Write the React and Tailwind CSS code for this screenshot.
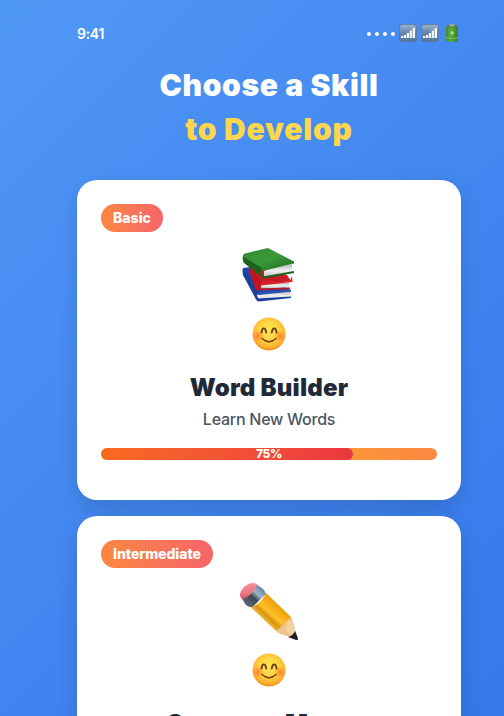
import React from "react";

function SignalIcon() {
  return (
    <svg width="18" height="18" viewBox="0 0 18 18">
      <defs>
        <linearGradient id="sig" x1="0" y1="0" x2="0" y2="1">
          <stop offset="0" stopColor="#9db6d0" />
          <stop offset="0.45" stopColor="#6688ad" />
          <stop offset="1" stopColor="#52779f" />
        </linearGradient>
      </defs>
      <rect x="0.4" y="0.4" width="17.2" height="17.2" rx="2.6" fill="url(#sig)" stroke="#5d7690" strokeWidth="0.8" />
      <path d="M2 12h2.200v2H2zM4.900 11h2.200v3H4.900zM7.800 9H10v5H7.800zM10.700 6.500h2.200V14h-2.200zM13.600 4h2.400v10h-2.400z" fill="#f4f8fb" />
    </svg>
  );
}

function BatteryIcon() {
  return (
    <svg width="14" height="18" viewBox="0 0 14 18">
      <defs>
        <linearGradient id="bat" x1="0" y1="0" x2="1" y2="0">
          <stop offset="0" stopColor="#3d8a2b" />
          <stop offset="0.35" stopColor="#5fae3c" />
          <stop offset="0.7" stopColor="#459a2b" />
          <stop offset="1" stopColor="#3a7f2c" />
        </linearGradient>
      </defs>
      <rect x="4" y="0" width="6" height="3" rx="1.2" fill="#8e9c85" />
      <rect x="1" y="1.3" width="12" height="16.4" rx="1.8" fill="url(#bat)" />
      <ellipse cx="7" cy="2.2" rx="5.6" ry="1.3" fill="#5b7a50" />
      <ellipse cx="7" cy="1.6" rx="2.6" ry="0.9" fill="#a6b59c" />
      <path d="M1 13.2q6 1 12 0v1.2q-6 1-12 0z" fill="#9ab583" opacity="0.6" />
      <path d="M8 6 4.6 9.6h2.2L6.2 12l3.4-3.7H7.4z" fill="#b5dca0" />
    </svg>
  );
}

function Books() {
  return (
    <svg width="54" height="56" viewBox="0 0 54 56">
      <defs>
        <linearGradient id="pages" x1="0" y1="0" x2="0" y2="1">
          <stop offset="0" stopColor="#b5b5b5" />
          <stop offset="0.5" stopColor="#f2f2f2" />
          <stop offset="1" stopColor="#bdbdbd" />
        </linearGradient>
        <linearGradient id="green" x1="0" y1="0" x2="1" y2="1">
          <stop offset="0" stopColor="#2b8a33" />
          <stop offset="0.5" stopColor="#3c9939" />
          <stop offset="1" stopColor="#227321" />
        </linearGradient>
      </defs>
      <path d="M1 21 8 20 48 43 49 45 16 48 1 28z" fill="#2447a6" />
      <path d="M17 47 48 44.500v5L18 53z" fill="url(#pages)" />
      <path d="M1 21 16 45q-2 4 1 6.500L49 49.500V51L17 54.500q-2 0-3-2L1 28q-1-4 0-7z" fill="#1c3f9b" />
      <path d="M16 45.500 49 42.500v2L17 48z" fill="#2a51b8" />
      <path d="M8 19 45 28 49 34 18 38z" fill="#c91c26" />
      <path d="M19 37 47 35.500v5l-28 1z" fill="url(#pages)" />
      <path d="M8 19 20 35q-2 3-.5 6.500L48 40.500V42L17 43.500q-3 0-4-3L8 26q-1-4 0-7z" fill="#c3141f" />
      <path d="M19 35.500 48 34l2-5 .5 6L19 38.500z" fill="#d9232c" />
      <path d="M1 9Q1 7 3 6.500L26 1 52 14.500 20 22z" fill="url(#green)" />
      <path d="M22 23.500 50 17.500V25L22 30z" fill="url(#pages)" />
      <path d="M1 9 20 21q-2.500 4 1 8.500l31-5.500v2L22 31.500q-2 0-3-2L2 16q-2-3-1-7z" fill="#1c641c" />
      <path d="M20 21 52 14v2.500L21 24z" fill="#2c842c" />
    </svg>
  );
}

function Pencil() {
  return (
    <svg width="60" height="60" viewBox="0 0 60 60">
      <defs>
        <linearGradient id="wood" gradientUnits="userSpaceOnUse" x1="38" y1="20" x2="23" y2="37">
          <stop offset="0" stopColor="#dd9510" />
          <stop offset="0.25" stopColor="#f5aa12" />
          <stop offset="0.6" stopColor="#fdc02a" />
          <stop offset="0.78" stopColor="#d99813" />
          <stop offset="1" stopColor="#f0b436" />
        </linearGradient>
        <linearGradient id="metal" gradientUnits="userSpaceOnUse" x1="26" y1="8" x2="11" y2="24">
          <stop offset="0" stopColor="#587997" />
          <stop offset="0.4" stopColor="#9fb7c8" />
          <stop offset="0.65" stopColor="#3b4650" />
          <stop offset="1" stopColor="#59626b" />
        </linearGradient>
        <linearGradient id="eraser" x1="0" y1="0" x2="0" y2="1">
          <stop offset="0" stopColor="#f88d9a" />
          <stop offset="0.55" stopColor="#ee7886" />
          <stop offset="1" stopColor="#b74e5f" />
        </linearGradient>
      </defs>
      <path d="M1 15C0 9 8 2 14 2q4 0 6 4L5 20q-3-2-4-5z" fill="url(#eraser)" />
      <path d="M18 4q7 3 9 9L13 26.500Q5 25 4 18 14 14 18 4z" fill="url(#metal)" />
      <path d="M27 12 52 36 54 41 42 53 37 50 12 26.500Q23 22 27 12z" fill="url(#wood)" />
      <path d="m18 24 22 25" stroke="#cd8d0d" strokeWidth="0.8" />
      <path d="M52 36 54 41 59 59 42 53 38 51q0-3 3-4 1-3 4-3 1-4 7-8z" fill="#ecc48f" />
      <path d="m49 40 4-2 6 21-13-10z" fill="#f7d6a6" opacity="0.7" />
      <path d="m56 50 3 7.500q0 2-2 1.500l-8-3q5-1 7-6z" fill="#1c1d20" />
    </svg>
  );
}

function Smile() {
  return (
    <svg width="34" height="34" viewBox="0 0 34 34">
      <defs>
        <radialGradient id="face" cx="0.5" cy="0.4" r="0.62">
          <stop offset="0" stopColor="#ffe552" />
          <stop offset="0.5" stopColor="#ffd343" />
          <stop offset="0.8" stopColor="#fcb22e" />
          <stop offset="1" stopColor="#e98a22" />
        </radialGradient>
        <radialGradient id="cheek">
          <stop offset="0" stopColor="#ff6a2a" stopOpacity="0.75" />
          <stop offset="1" stopColor="#ff762e" stopOpacity="0" />
        </radialGradient>
      </defs>
      <circle cx="17" cy="17" r="16.5" fill="url(#face)" />
      <circle cx="6" cy="19" r="6" fill="url(#cheek)" />
      <circle cx="28" cy="19" r="6" fill="url(#cheek)" />
      <path d="M9.500 15.500c.7-5.500 3.800-5.500 4.800 0M19.700 15.500c1-5.500 4.100-5.500 4.800 0" fill="none" stroke="#66401c" strokeWidth="1.900" strokeLinecap="round" />
      <path d="M10 21.500Q17 28 24 21.500" fill="none" stroke="#7a3f13" strokeWidth="1.500" strokeLinecap="round" />
    </svg>
  );
}

function SkillCard({ level, badgeClass, icon, title, subtitle, progress }) {
  return (
    <section className="flex h-80 shrink-0 flex-col items-center rounded-[20px] bg-white px-6 pt-6 shadow-[0_8px_20px_rgba(0,0,0,0.14)]">
      <span className={`flex h-7 items-center justify-center self-start rounded-full bg-gradient-to-r from-[#fb873f] to-[#f76469] text-sm font-extrabold text-white ${badgeClass}`}>
        {level}
      </span>
      <div className="mt-3 flex h-[62px] items-center justify-center">{icon}</div>
      <div className="mt-[11px] h-[34px]"><Smile /></div>
      <h2 className="mt-[21px] text-2xl leading-8 font-black tracking-[0.22px] whitespace-nowrap text-[#1f2937]">{title}</h2>
      <p className="mt-[3px] text-base leading-6 font-medium tracking-[-0.25px] text-[#4b5563]">{subtitle}</p>
      <div className="relative mt-[17px] h-3 w-full rounded-full bg-gradient-to-r from-[#fbbf24] to-[#fb873f]">
        <div className="h-full rounded-full bg-gradient-to-r from-[#f96a20] to-[#eb3740]" style={{ width: `${progress}%` }} />
        <span className="absolute inset-0 flex items-center justify-center text-xs leading-3 font-extrabold tracking-[-0.3px] text-white">{progress}%</span>
      </div>
    </section>
  );
}

export default function App() {
  return (
    <div className="h-[716px] overflow-hidden bg-[linear-gradient(135deg,#5098f6_0%,#3677eb_100%)] pl-[77px] font-['Inter','Liberation_Sans',sans-serif]">
      <main className="flex w-96 flex-col">
        <header className="flex h-[66px] items-center justify-between pt-0.5">
          <span className="text-sm font-semibold tracking-[-0.3px] text-white">9:41</span>
          <div className="flex items-center">
            <div className="mr-1 flex gap-1">
              {[0, 1, 2, 3].map((dot) => <i key={dot} className="size-1 rounded-full bg-white" />)}
            </div>
            <span className="-mt-0.5"><SignalIcon /></span>
            <span className="-mt-0.5 ml-1"><SignalIcon /></span>
            <span className="-mt-0.5 mr-0.5 ml-1.5"><BatteryIcon /></span>
          </div>
        </header>
        <h1 className="flex h-[114px] flex-col text-center text-[30px] leading-[44px] font-black text-white">
          <span className="-mt-[3px] tracking-[0.65px]">Choose a Skill</span>
          <span className="tracking-[0.8px] text-[#fdd64b]">to Develop</span>
        </h1>
        <div className="flex flex-col gap-4">
          <SkillCard level="Basic" badgeClass="w-[62px]" icon={<Books />} title="Word Builder" subtitle="Learn New Words" progress={75} />
          <SkillCard level="Intermediate" badgeClass="w-28 tracking-[-0.05px]" icon={<Pencil />} title="Grammar Master" subtitle="Perfect Your Grammar" progress={60} />
        </div>
      </main>
    </div>
  );
}
